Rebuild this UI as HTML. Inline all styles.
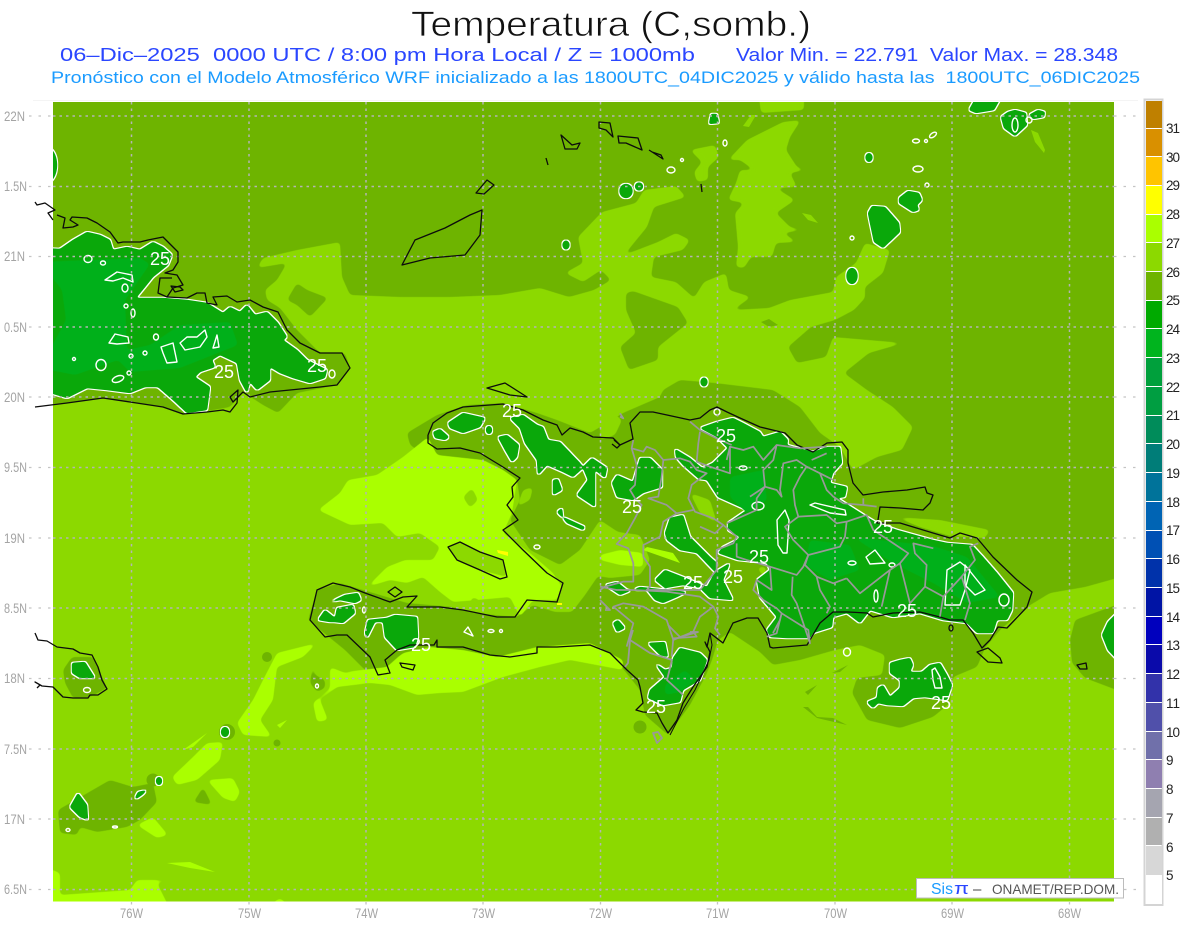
<!DOCTYPE html>
<html lang="es">
<head>
<meta charset="utf-8">
<title>Temperatura (C,somb.)</title>
<style>
html,body{margin:0;padding:0;background:#fff;width:1200px;height:927px;overflow:hidden}
svg{display:block}
text{font-family:"Liberation Sans",sans-serif}
.d{fill:#6eb400}
.l{fill:#8cd900}
.b{fill:#aaff00}
.g{fill:#0aa80a}
.g2{fill:#00b01a}
.w{fill:none;stroke:#fff;stroke-width:1.4;stroke-linejoin:round}
.c{fill:none;stroke:#0c0c0c;stroke-width:1.3;stroke-linejoin:round}
.p{fill:none;stroke:#999;stroke-width:1.8;stroke-linejoin:round}
.n{fill:#fff;font-size:18px}
.a{fill:#a4a4a4;font-size:13.5px}
.k{fill:#222;font-size:13.5px}
</style>
</head>
<body>
<svg width="1200" height="927" viewBox="0 0 1200 927" xmlns="http://www.w3.org/2000/svg">
<defs>
<clipPath id="m"><rect x="53" y="102" width="1061" height="799.5"/></clipPath>
<filter id="s" filterUnits="userSpaceOnUse" x="0" y="0" width="1200" height="927" color-interpolation-filters="sRGB">
<feGaussianBlur stdDeviation="2"/>
<feComponentTransfer><feFuncA type="linear" slope="6" intercept="-2.5"/></feComponentTransfer>
</filter>
<filter id="gf" filterUnits="userSpaceOnUse" x="0" y="0" width="1200" height="927" color-interpolation-filters="sRGB">
<feGaussianBlur in="SourceAlpha" stdDeviation="1.1" result="b"/>
<feComponentTransfer in="b" result="t"><feFuncA type="linear" slope="6" intercept="-2"/></feComponentTransfer>
<feMorphology in="t" operator="dilate" radius="1.2" result="o"/>
<feFlood flood-color="#ffffff"/>
<feComposite in2="o" operator="in" result="wh"/>
<feFlood flood-color="#0aa80a"/>
<feComposite in2="t" operator="in" result="gr"/>
<feMerge><feMergeNode in="wh"/><feMergeNode in="gr"/></feMerge>
</filter>
</defs>
<rect width="1200" height="927" fill="#fff"/>

<text x="411" y="36" font-size="35.5" fill="#111" stroke="#fff" stroke-width=".7" paint-order="normal" textLength="400" lengthAdjust="spacingAndGlyphs">Temperatura (C,somb.)</text>
<text x="60" y="61" font-size="18" fill="#2a46ff" textLength="635" lengthAdjust="spacingAndGlyphs" xml:space="preserve">06–Dic–2025  0000 UTC / 8:00 pm Hora Local / Z = 1000mb</text>
<text x="736" y="61" font-size="18" fill="#2a46ff" textLength="382" lengthAdjust="spacingAndGlyphs" xml:space="preserve">Valor Min. = 22.791  Valor Max. = 28.348</text>
<text x="51" y="83" font-size="17" fill="#1a9bff" textLength="1089" lengthAdjust="spacingAndGlyphs" xml:space="preserve">Pronóstico con el Modelo Atmosférico WRF inicializado a las 1800UTC_04DIC2025 y válido hasta las  1800UTC_06DIC2025</text>

<g clip-path="url(#m)">
<rect x="53" y="102" width="1061" height="800" fill="#8cd900"/>
<g filter="url(#s)">
<polygon class="d" points="35,85 1135,85 1135,573 1085,587 1050,593 1027,607 1000,630 985,648 977,667 953,677 950,703 933,717 900,728 867,720 852,693 857,678 882,675 885,655 860,645 835,650 800,660 773,665 760,652 745,642 730,632 718,640 712,660 706,675 690,705 668,735 645,715 640,690 612,655 590,645 560,650 500,658 430,648 400,655 378,675 365,670 345,650 308,620 317,590 340,583 363,590 407,603 453,607 473,613 517,617 533,605 555,612 572,612 585,595 598,576 610,578 640,575 650,560 640,535 618,532 600,520 580,550 560,565 530,550 510,520 520,500 517,480 503,470 483,460 437,463 410,445 407,433 437,415 467,405 503,403 537,413 557,420 590,433 607,423 623,413 660,397 663,390 680,380 715,383 773,390 800,407 820,433 840,447 853,470 877,457 902,450 913,427 893,407 867,390 844,373 869,353 904,343 833,337 826,357 797,363 788,347 811,327 835,320 854,310 865,298 865,287 883,273 890,250 865,243 856,263 836,277 833,292 790,300 769,308 733,310 751,297 729,290 726,273 704,282 694,298 676,282 651,277 654,257 683,250 690,240 676,233 658,242 624,255 647,227 654,207 686,197 676,186 644,190 636,203 602,212 578,237 583,263 565,273 583,282 601,270 611,280 594,290 569,297 540,288 500,295 450,297 400,297 350,295 342,277 340,242 297,250 263,258 257,268 287,263 277,280 265,290 267,300 280,308 297,330 320,353 345,353 350,368 337,385 297,393 278,413 263,405 243,392 230,407 213,410 183,414 163,407 103,398 67,403 35,405"/>
</g>
<g filter="url(#s)">
<polygon class="l" points="783,122 801,120 790,137 786,150 797,167 806,170 790,173 797,187 776,188 795,200 776,213 790,227 804,230 783,233 797,242 776,243 772,257 751,257 744,268 736,267 738,247 735,213 744,203 728,200 736,183 740,170 754,170 740,160 728,160 747,140 761,133"/>
<polygon class="l" points="758,90 804,90 804,110 761,113"/>
<polygon class="l" points="690,150 715,145 719,157 708,167 708,180 697,182 694,172 702,162"/>
<polygon class="l" points="600,423 612,412 622,420 615,435 600,440"/>
<polygon class="l" points="523,490 533,487 530,500 517,507"/>
<polygon class="l" points="690,493 710,500 717,523 700,513"/>
<polygon class="l" points="757,567 767,567 763,577"/>
<polygon class="l" points="895,517 940,520 990,530 985,538 950,536 920,527"/>
</g>
<polygon class="l" points="751,115 756,115 749,127 743,126"/>
<polygon class="l" points="1031,130 1038,133 1045,150 1044,153 1035,142"/>
<polygon class="l" points="802,213 811,215 818,223 808,220"/>
<g filter="url(#s)">
<polygon class="d" points="626,293 633,291 678,307 688,323 658,347 658,360 629,370 620,347 636,333 626,310"/>
<polygon class="d" points="287,300 297,283 307,290 328,298 310,317 297,305"/>
<polygon class="d" points="63,670 72,657 93,657 107,688 90,697 73,698 65,683"/>
<polygon class="d" points="58,810 110,780 133,787 153,783 157,802 140,820 127,827 97,832 80,827 77,835 60,833"/>
<polygon class="d" points="197,797 203,787 212,805 193,802"/>
<polygon class="d" points="313,663 315,675 325,680 325,688 317,692 310,683"/>
<polygon class="d" points="1130,600 1075,620 1070,640 1072,663 1085,678 1130,695"/>
</g>
<polygon class="d" points="761,322 769,319 778,325 769,327"/>
<polygon class="d" points="803,707 817,718 847,725 833,718 817,717 808,707"/>
<polygon class="d" points="805,692 817,685 808,695"/>
<polygon class="d" points="832,673 848,665 840,672"/>
<circle class="d" cx="267" cy="657" r="5"/><circle class="d" cx="277" cy="743" r="3.5"/>
<circle class="d" cx="153" cy="780" r="6.5"/><circle class="d" cx="227" cy="732" r="8"/>
<circle class="d" cx="640" cy="727" r="6.5"/>
<g filter="url(#s)">
<polygon class="b" points="318,510 340,493 348,480 377,475 403,457 428,437 437,455 483,460 503,470 517,480 512,513 503,533 530,553 553,573 562,587 557,600 533,600 520,617 510,597 477,600 453,602 440,592 423,577 407,583 390,580 367,587 387,567 405,560 433,560 440,547 420,533 397,537 383,523 350,525"/>
<polygon class="b" points="600,555 620,550 643,553 643,567 620,565 600,560"/>
<polygon class="b" points="387,667 403,653 430,647 463,650 497,657 537,647 590,643 623,660 623,670 570,660 540,667 503,677 463,692 440,693 417,695 390,685 370,683 345,672"/>
<polygon class="b" points="330,667 370,683 337,687 320,700 328,720 317,722 313,703 330,688"/>
<polygon class="b" points="263,680 277,653 317,643 303,657 277,667 273,700 260,720 272,737 243,735 237,723 253,700"/>
<polygon class="b" points="172,777 193,757 207,743 223,742 220,760 197,780 177,785"/>
<polygon class="b" points="207,780 233,778 240,792 235,802 223,798"/>
<polygon class="b" points="137,825 153,817 168,835 157,838"/>
<polygon class="b" points="40,865 60,873 60,895 130,890 137,880 182,880 157,883 173,915 40,915"/>
<polygon class="b" points="255,915 280,898 300,915"/>
</g>
<polygon class="b" points="643,550 680,563 673,553 647,547"/>
<polygon class="b" points="183,750 207,733 193,747"/>
<polygon class="b" points="277,725 287,720 280,728"/>
<polygon class="b" points="167,863 190,862 215,872 190,868"/>
<g filter="url(#s)">
<polygon class="l" points="463,497 472,488 478,500 470,508"/>
<polygon class="l" points="448,547 460,542 480,552 503,560 507,577 480,570 457,560"/>
<polygon class="l" points="472,597 480,600 478,610 468,610"/>
</g>
<polygon fill="#ffff00" points="497,550 508,552 508,556 498,553"/>
<rect x="557" y="603" width="5" height="2" fill="#ffff00"/>

<!-- green areas -->
<g filter="url(#gf)">
<polygon class="g" points="40,248 60,249 73,240 87,232 100,235 110,240 113,250 127,247 140,250 153,242 163,247 172,255 168,265 153,277 145,287 136,298 163,298 187,300 207,303 223,313 230,307 240,312 247,305 255,315 267,312 278,323 287,337 283,340 297,350 307,360 327,370 325,378 310,383 293,378 280,373 270,367 270,380 257,390 250,382 247,393 240,380 237,363 220,355 212,360 215,367 200,372 195,377 210,387 207,410 187,413 173,400 158,387 145,387 130,393 107,390 87,388 67,398 40,390"/>
<polygon class="g" points="700,428 717,422 733,418 743,423 760,432 763,437 780,432 788,440 787,445 813,452 827,447 840,447 842,463 833,473 830,483 847,487 845,497 837,498 867,517 877,523 897,530 933,540 947,543 972,545 983,557 997,573 1013,593 1012,610 1007,620 997,620 993,633 977,633 967,623 943,620 920,613 893,617 870,610 860,623 847,613 833,617 832,627 813,633 810,638 787,638 770,637 767,630 777,617 760,597 757,580 770,570 767,563 738,560 718,553 723,547 737,540 740,537 728,530 728,523 747,510 718,497 707,480 699,479 683,465 676,457 675,449 690,458 702,468 713,463 728,448 717,437 700,428"/>
<polygon class="g" points="612,483 617,475 633,482 640,458 650,458 662,470 662,487 643,493 633,500 617,497"/>
<polygon class="g" points="665,533 670,518 683,515 690,537 710,557 717,563 715,572 697,553 680,550 667,540"/>
<polygon class="g" points="655,580 665,570 683,577 707,587 715,572 730,563 723,580 733,600 710,598 700,588 683,585 665,588"/>
<polygon class="g" points="605,585 617,582 627,590 647,590 655,600 663,603 677,597 687,592 640,587 620,595"/>
<polygon class="g" points="613,623 618,620 625,628 617,632"/>
<polygon class="g" points="648,643 665,642 668,657 660,655"/>
<polygon class="g" points="680,648 700,653 707,660 700,680 683,690 680,702 663,705 648,698 650,690 665,677 655,663 665,670 672,668 673,658"/>
<polygon class="g" points="448,423 463,413 485,418 480,427 463,433 450,428"/>
<polygon class="g" points="433,432 440,429 449,437 445,440 435,438"/>
<ellipse class="g" cx="489" cy="430" rx="3" ry="4"/>
<polygon class="g" points="498,437 507,435 519,445 517,457 512,462 505,450"/>
<polygon class="g" points="510,418 523,415 537,425 543,427 548,440 560,442 580,463 583,467 592,458 607,468 605,478 595,470 595,507 577,495 588,480 583,468 573,477 563,472 547,465 538,475 537,460 525,443 520,428"/>
<polygon class="g" points="553,480 558,479 562,490 553,495"/>
<polygon class="g" points="557,512 562,508 563,517 585,527 583,530 567,523 563,518"/>
<polygon class="g" points="328,603 345,595 358,593 361,600 355,603 340,600"/>
<polygon class="g" points="318,620 325,610 335,618 337,608 353,605 355,613 343,623 335,622 330,622"/>
<polygon class="g" points="365,633 368,620 387,618 395,615 417,617 418,637 415,647 397,650 385,637 383,622 375,622 367,638"/>
<polygon class="g" points="867,702 877,698 878,688 883,685 890,697 900,688 900,680 890,673 890,663 900,660 910,658 913,665 910,672 922,672 930,665 940,663 947,675 952,685 947,700 925,697 913,698 903,706 887,705 878,703 873,708"/>
<polygon class="g" points="72,663 85,662 95,678 80,678 72,673"/>
<polygon class="g" points="70,807 78,793 87,805 88,820 80,817"/>
<polygon class="g" points="135,798 138,792 147,790 142,795 136,799"/>
<ellipse class="g" cx="159" cy="781" rx="3" ry="4"/>
<ellipse class="g" cx="225" cy="732" rx="4" ry="5"/>
<ellipse class="g" cx="46" cy="165" rx="11" ry="18"/>
<ellipse class="g" cx="626" cy="191" rx="6.5" ry="7"/><ellipse class="g" cx="639" cy="186.5" rx="4" ry="4"/>
<polygon class="g" points="711,114 717,114 719,123 709,124"/>
<ellipse class="g" cx="566" cy="245" rx="3.5" ry="4.5"/>
<ellipse class="g" cx="869" cy="157.5" rx="3.5" ry="4.5"/>
<polygon class="g" points="872,206 885,207 899,223 900,232 883,248 874,242 870,223 868,213"/>
<polygon class="g" points="908,191 919,193 922,200 917,205 919,210 913,212 899,203 899,198"/>
<ellipse class="g" cx="852" cy="276" rx="5.5" ry="8"/>
<ellipse class="g" cx="704" cy="382" rx="3.5" ry="4.5"/>
<polygon class="g" points="969,110 979,92 1004,92 994,110 976,113"/>
<polygon class="g" points="1015,110 1026,113 1027,125 1015,136 1004,128 1001,117 1008,112"/>
<polygon class="g" points="1029,115 1038,110 1045,112 1044,117 1033,119"/>
<polygon class="g" points="1125,605 1108,622 1102,635 1108,650 1125,668"/>
</g>
<g filter="url(#s)">
<polygon class="g2" points="40,262 140,258 150,264 125,300 127,350 150,345 180,325 230,322 238,345 180,368 130,372 118,360 75,375 40,368 66,320 62,290"/>
<polygon class="g2" points="730,477 763,470 767,500 747,513 730,497"/>
<polygon class="g2" points="853,537 933,546 967,557 1000,597 967,603 933,583 893,563"/>
<polygon class="g2" points="810,540 850,545 860,570 830,580 805,565"/>
<polygon class="g2" points="665,685 685,670 695,680 680,692 665,695"/>
</g>
<!-- thin contour loops -->
<g class="w">
<ellipse cx="364" cy="610" rx="1.5" ry="3"/>
<ellipse cx="537" cy="547" rx="3" ry="2"/>
<polygon points="468,627 473,636 464,632"/>
<ellipse cx="491" cy="631" rx="3" ry="1.5"/><circle cx="501" cy="631" r="1.5"/>
<ellipse cx="317" cy="686" rx="1.5" ry="2"/>
<polygon points="932,670 935,668 940,677 942,688 935,688 933,680"/>
<ellipse cx="847" cy="652" rx="3.5" ry="4"/>
<ellipse cx="87" cy="690" rx="3.5" ry="2.5"/>
<ellipse cx="68" cy="830" rx="2" ry="1.5"/><ellipse cx="115" cy="827" rx="2.5" ry="1"/>
<ellipse cx="671" cy="170" rx="4" ry="3"/><circle cx="682" cy="160" r="1.5"/>
<ellipse cx="725" cy="143" rx="2" ry="3"/>
<ellipse cx="916" cy="141" rx="3.5" ry="2"/><circle cx="926" cy="141" r="1.5"/>
<ellipse cx="933" cy="135" rx="4" ry="2" transform="rotate(-35 933 135)"/>
<ellipse cx="918" cy="169" rx="5" ry="3"/><circle cx="927" cy="185" r="2"/><circle cx="852" cy="238" r="2"/>
<ellipse cx="1015" cy="125" rx="3" ry="7"/>
<circle cx="1029" cy="120" r="3"/>
<ellipse cx="88" cy="259" rx="4" ry="3.5"/><ellipse cx="103" cy="263" rx="2.5" ry="2"/>
<polygon points="105,280 117,272 132,275 133,282 123,278 113,281"/>
<ellipse cx="125" cy="288" rx="3" ry="4"/><circle cx="126" cy="306" r="2"/><ellipse cx="133" cy="313" rx="2" ry="4"/>
<polygon points="109,343 115,334 128,337 129,343 117,344"/>
<ellipse cx="156" cy="337" rx="2.5" ry="3"/>
<polygon points="161,347 173,343 177,362 167,363 163,353"/>
<polygon points="180,343 187,337 197,337 205,330 207,337 200,347 185,350"/>
<polygon points="213,348 217,335 219,347"/>
<ellipse cx="101" cy="365" rx="5" ry="5.5"/><circle cx="74" cy="359" r="1.5"/><circle cx="131" cy="356" r="2"/><circle cx="145" cy="353" r="2"/>
<ellipse cx="118" cy="379" rx="6" ry="3" transform="rotate(-20 118 379)"/><circle cx="129" cy="373" r="2"/>
<ellipse cx="332" cy="374" rx="3" ry="4"/>
<ellipse cx="717" cy="412" rx="3" ry="3"/>
<ellipse cx="743" cy="468" rx="4" ry="2"/>
<ellipse cx="758" cy="506" rx="6" ry="4"/>
<polygon points="777,520 785,510 789,520 787,553 783,553 778,545"/>
<polygon points="810,505 815,503 845,510 846,515 830,513"/>
<polygon points="866,557 875,550 885,563 870,564"/>
<ellipse cx="852" cy="563" rx="4" ry="2"/>
<ellipse cx="892" cy="565" rx="3" ry="2"/>
<polygon points="965,565 985,590 975,595 965,585"/>
<ellipse cx="1004" cy="600" rx="5" ry="6"/>
<polygon points="947,570 960,562 970,570 965,590 960,605 945,605"/>
<ellipse cx="876" cy="596" rx="2" ry="6"/>
</g>
<!-- inner grid -->
<g stroke="#b4b4b4" stroke-width="1.5" stroke-dasharray="2.5 4" fill="none">
<path d="M53 116H1114M53 186.5H1114M53 256.5H1114M53 327H1114M53 397H1114M53 467.5H1114M53 538H1114M53 608H1114M53 678.5H1114M53 749H1114M53 819H1114M53 889.5H1114"/>
<path d="M131.5 102V902M249 102V902M366 102V902M483 102V902M600.5 102V902M717.5 102V902M835 102V902M952 102V902M1069.5 102V902"/>
</g>
</g>

<!-- outer grid ticks -->
<g stroke="#c4c4c4" stroke-width="1.3" stroke-dasharray="2.5 7" fill="none">
<path d="M29 116H53M29 186.5H53M29 256.5H53M29 327H53M29 397H53M29 467.5H53M29 538H53M29 608H53M29 678.5H53M29 749H53M29 819H53M29 889.5H53"/>
<path d="M1114 116H1136M1114 186.5H1136M1114 256.5H1136M1114 327H1136M1114 397H1136M1114 467.5H1136M1114 538H1136M1114 608H1136M1114 678.5H1136M1114 749H1136M1114 819H1136M1124 889.5H1136"/>
<path d="M131.5 902V906M249 902V906M366 902V906M483 902V906M600.5 902V906M717.5 902V906M835 902V906M952 902V906M1069.5 902V906"/>
</g>
<rect x="33" y="100" width="1105" height="1" fill="#f4f4f4"/>

<!-- coast -->
<g class="c">
<polyline points="35,202 37,205 45,203 55,210 48,213 53,220"/>
<polyline points="57,215 65,218 63,228 73,227 78,225 70,220 72,217 87,218 97,223 110,232 118,243 123,242 140,242 148,240 163,237 173,247 178,252 178,262 173,270 165,273 177,275 183,285 173,288 167,297 158,293 160,278 172,278"/>
<polygon points="171,286 180,287 183,290 175,292"/>
<polyline points="167,297 187,298 197,293 205,293 207,303 217,305 213,297 227,296 237,302 250,300 263,307 278,312 287,330 300,343 320,353 342,353 350,368 337,385 320,387 290,390 270,392 250,397 243,392 233,402 230,397 238,390 237,403 230,412 223,410 207,412 183,414 163,407 130,402 103,398 67,403 35,407"/>
<polyline points="35,633 38,640 47,641 57,647 73,649 80,653 92,655 98,667 102,680 107,689 98,695 90,695 88,698 73,698 63,697 53,687 42,686 35,682 40,685 37,688"/>
<polyline points="428,435 433,423 447,413 463,407 503,404 523,410 543,420 557,425 562,435 570,428 583,432 593,437 613,438 620,445 633,439 630,423 640,412 653,412 667,415 690,420 700,418 710,410 717,407 727,412 740,418 760,427 785,433 797,445 813,452 827,443 842,442 848,450 848,463 853,483 863,495 883,492 907,490 925,487 927,493 933,495 930,503 923,510 900,508 880,507 878,520 877,523 900,523 933,533 950,538 960,533 977,538 993,557 1017,580 1032,592 1027,607 1007,628 998,627 990,640 982,648 973,633 963,620 950,620 940,617 920,612 893,613 873,617 867,613 848,612 833,612 820,623 807,645 773,648 770,647 767,633 758,618 747,618 733,623 723,643 710,633 707,647 705,642 710,652 707,667 693,687 683,703 677,720 668,733 662,723 657,713 643,712 636,710 643,703 640,687 638,680 627,670 620,663 610,653 590,645 557,647 537,647 537,653 510,657 490,655 463,647 437,647 437,640 434,645 410,645 397,650 385,660 390,673 378,675 370,657 347,635 337,635 325,637 310,620 317,590 333,583 350,587 365,593 390,602 403,597 417,596 407,607 440,607 463,610 497,617 515,617 527,600 557,602 563,583 547,573 523,550 503,530 518,520 507,505 513,497 512,487 520,478 503,467 480,453 460,448 437,449 428,443 428,435"/>
<polyline points="710,633 712,645 709,660 695,690 684,708 670,735" stroke-width="1"/>
<polygon points="448,547 460,542 480,552 503,560 507,577 500,579 480,570 457,560"/>
<polygon points="487,388 505,383 527,397 510,395"/>
<polygon points="388,592 395,587 402,592 395,597"/>
<polygon points="400,663 415,665 413,670 402,667"/>
<polygon points="402,265 415,240 445,228 470,215 482,210 480,235 465,255 430,258"/>
<polygon points="476,193 487,180 494,185 484,194"/>
<polygon points="977,652 988,648 1000,658 1002,663 988,662"/>
<polygon points="1077,665 1086,663 1087,669 1080,669"/>
<polygon points="599,122 610,123 613,137 606,130 599,128"/>
<polygon points="618,136 638,138 642,150 626,143 619,143"/>
<polygon points="561,135 572,145 580,143 577,149 565,149"/>
<polyline points="546,158 548,165"/>
<polyline points="649,150 663,159 661,155 652,152"/>
<polyline points="701,184 702,192"/>
<polyline points="614,440 620,445 617,448 612,444"/>
<ellipse cx="951" cy="628" rx="2" ry="3"/>
</g>

<!-- provinces -->
<g class="p" transform="translate(600 390) scale(.3333)" style="stroke-width:5.2">
<polyline points="100,150 95,175 110,225 105,285 90,300 105,325 125,345 105,385 80,430 50,462 85,475 100,520 100,575 70,575 15,590 0,600"/>
<polyline points="95,175 130,185 140,170 165,180 190,210 240,205 270,215 290,240 320,250 275,285 265,325 285,365 340,385 370,405"/>
<polyline points="190,210 185,260 175,320 145,325 200,345 230,370 280,360"/>
<polyline points="230,370 190,395 180,440 130,465 130,500 150,530 150,590 140,600 200,600 300,600 350,540 350,480 400,460 410,440 370,405 345,430 300,410"/>
<polyline points="300,125 295,160 290,215 330,230 390,250 390,170 430,180 460,170 490,210 530,165 600,175 680,170"/>
<polyline points="390,170 380,210"/>
<polyline points="270,95 300,120 350,145 395,165"/>
<polyline points="530,165 520,210 490,240 495,290 530,300 545,320 540,300 550,220 590,210 620,230 600,260 580,300 585,345 595,380 555,410 580,450 625,495"/>
<polyline points="620,230 660,250 680,300 700,320 730,340 790,345 830,350"/>
<polyline points="635,210 680,190"/>
<polyline points="660,250 700,270"/>
<polyline points="790,325 790,345"/>
<polyline points="450,320 495,290 470,325 470,360 380,400"/>
<polyline points="595,380 680,375 710,400 740,395 800,375 820,420 925,490 900,520 870,540 845,650"/>
<polyline points="740,395 735,440 720,470 625,495 610,530 590,555 510,530 440,510 410,500 410,460"/>
<polyline points="625,495 615,525 650,560 660,600 690,650 680,670"/>
<polyline points="740,565 700,580 650,560"/>
<polyline points="740,565 780,610 870,540"/>
<polyline points="900,520 930,640 975,590 980,525 945,490 940,460 1000,475"/>
<polyline points="975,590 1030,620 1020,680"/>
<polyline points="1030,620 1085,560 1110,640 1095,690"/>
<polyline points="1085,560 1125,510 1110,470 1135,460"/>
<polyline points="578,560 575,615 590,640 610,700 630,760 625,720 545,670"/>
<polyline points="510,530 515,600 470,570 460,600 490,630 530,655 545,670 530,730 500,740"/>
<polyline points="0,590 50,600 100,600 200,605 300,620 340,650 355,680 345,715 360,735"/>
<polyline points="340,650 300,680 280,725 220,750 200,690 130,650 70,640 40,650 100,700 80,770"/>
<polyline points="280,725 290,740 220,745 215,800"/>
<polyline points="0,630 30,660 15,660"/>
<polyline points="60,70 70,85 60,80"/>
</g>
<g class="p">
<polyline points="633,630 630,640 628,663 625,667"/>
<polyline points="630,640 650,653 672,660 667,680 680,692 683,695"/>
<polyline points="690,632 698,632 680,637 668,625"/>
<polyline points="773,633 780,620"/>
<polygon points="653,733 658,732 662,738 657,743"/>
</g>

<!-- contour labels -->
<text class="n" x="150" y="265">25</text>
<text class="n" x="214" y="378">25</text>
<text class="n" x="307" y="372">25</text>
<text class="n" x="502" y="417">25</text>
<text class="n" x="716" y="442">25</text>
<text class="n" x="622" y="513">25</text>
<text class="n" x="873" y="533">25</text>
<text class="n" x="749" y="563">25</text>
<text class="n" x="723" y="583">25</text>
<text class="n" x="683" y="589">25</text>
<text class="n" x="897" y="617">25</text>
<text class="n" x="646" y="713">25</text>
<text class="n" x="931" y="709">25</text>
<text class="n" x="411" y="651">25</text>

<!-- axis labels -->
<g class="a">
<text x="4" y="121" textLength="21" lengthAdjust="spacingAndGlyphs">22N</text>
<text x="4" y="191" textLength="23" lengthAdjust="spacingAndGlyphs">1.5N</text>
<text x="4" y="261" textLength="21" lengthAdjust="spacingAndGlyphs">21N</text>
<text x="4" y="332" textLength="23" lengthAdjust="spacingAndGlyphs">0.5N</text>
<text x="4" y="402" textLength="21" lengthAdjust="spacingAndGlyphs">20N</text>
<text x="4" y="472" textLength="23" lengthAdjust="spacingAndGlyphs">9.5N</text>
<text x="4" y="543" textLength="21" lengthAdjust="spacingAndGlyphs">19N</text>
<text x="4" y="613" textLength="23" lengthAdjust="spacingAndGlyphs">8.5N</text>
<text x="4" y="683" textLength="21" lengthAdjust="spacingAndGlyphs">18N</text>
<text x="4" y="754" textLength="23" lengthAdjust="spacingAndGlyphs">7.5N</text>
<text x="4" y="824" textLength="21" lengthAdjust="spacingAndGlyphs">17N</text>
<text x="4" y="894" textLength="23" lengthAdjust="spacingAndGlyphs">6.5N</text>
<text x="120" y="918" textLength="23" lengthAdjust="spacingAndGlyphs">76W</text>
<text x="238" y="918" textLength="23" lengthAdjust="spacingAndGlyphs">75W</text>
<text x="355" y="918" textLength="23" lengthAdjust="spacingAndGlyphs">74W</text>
<text x="472" y="918" textLength="23" lengthAdjust="spacingAndGlyphs">73W</text>
<text x="589" y="918" textLength="23" lengthAdjust="spacingAndGlyphs">72W</text>
<text x="706" y="918" textLength="23" lengthAdjust="spacingAndGlyphs">71W</text>
<text x="824" y="918" textLength="23" lengthAdjust="spacingAndGlyphs">70W</text>
<text x="941" y="918" textLength="23" lengthAdjust="spacingAndGlyphs">69W</text>
<text x="1058" y="918" textLength="23" lengthAdjust="spacingAndGlyphs">68W</text>
</g>

<!-- credit box -->
<rect x="916.5" y="878.5" width="207" height="19.5" fill="#fff" stroke="#bcbcbc"/>
<text x="931" y="894" font-size="15.5" fill="#1a9bff" textLength="22" lengthAdjust="spacingAndGlyphs">Sis</text>
<text x="954" y="894" font-size="17" fill="#2a46ff" textLength="15" lengthAdjust="spacingAndGlyphs">π</text>
<text x="973" y="894" font-size="15" fill="#444">–</text>
<text x="992" y="894" font-size="14" fill="#555" textLength="127" lengthAdjust="spacingAndGlyphs">ONAMET/REP.DOM.</text>

<!-- colour bar -->
<rect x="1144.5" y="99.5" width="18" height="805.5" fill="#fff" stroke="#d4d4d4" stroke-width="2"/>
<g>
<rect x="1146" y="101" width="16" height="27" fill="#bf8000"/>
<rect x="1146" y="129" width="16" height="27" fill="#d99000"/>
<rect x="1146" y="157" width="16" height="28" fill="#ffc400"/>
<rect x="1146" y="186" width="16" height="28" fill="#ffff00"/>
<rect x="1146" y="215" width="16" height="27" fill="#aaff00"/>
<rect x="1146" y="243" width="16" height="28" fill="#8cd900"/>
<rect x="1146" y="272" width="16" height="28" fill="#6eb400"/>
<rect x="1146" y="301" width="16" height="27" fill="#00aa00"/>
<rect x="1146" y="329" width="16" height="28" fill="#00b41e"/>
<rect x="1146" y="358" width="16" height="28" fill="#00a03c"/>
<rect x="1146" y="387" width="16" height="28" fill="#009e41"/>
<rect x="1146" y="416" width="16" height="27" fill="#008c5a"/>
<rect x="1146" y="444" width="16" height="28" fill="#007d78"/>
<rect x="1146" y="473" width="16" height="28" fill="#00739a"/>
<rect x="1146" y="502" width="16" height="28" fill="#0064b4"/>
<rect x="1146" y="531" width="16" height="27" fill="#0050b4"/>
<rect x="1146" y="559" width="16" height="28" fill="#0032aa"/>
<rect x="1146" y="588" width="16" height="28" fill="#0014a5"/>
<rect x="1146" y="617" width="16" height="27" fill="#0000be"/>
<rect x="1146" y="645" width="16" height="28" fill="#0a0aaa"/>
<rect x="1146" y="674" width="16" height="28" fill="#3232aa"/>
<rect x="1146" y="703" width="16" height="28" fill="#5050aa"/>
<rect x="1146" y="732" width="16" height="27" fill="#7070aa"/>
<rect x="1146" y="760" width="16" height="28" fill="#8f7fb0"/>
<rect x="1146" y="789" width="16" height="28" fill="#a5a5b0"/>
<rect x="1146" y="818" width="16" height="27" fill="#b0b0b0"/>
<rect x="1146" y="846" width="16" height="29" fill="#d7d7d7"/>
<rect x="1146" y="875" width="16" height="29" fill="#ffffff"/>
</g>
<g class="k">
<text x="1166" y="133" textLength="14">31</text>
<text x="1166" y="162" textLength="14">30</text>
<text x="1166" y="190" textLength="14">29</text>
<text x="1166" y="219" textLength="14">28</text>
<text x="1166" y="248" textLength="14">27</text>
<text x="1166" y="277" textLength="14">26</text>
<text x="1166" y="305" textLength="14">25</text>
<text x="1166" y="334" textLength="14">24</text>
<text x="1166" y="363" textLength="14">23</text>
<text x="1166" y="392" textLength="14">22</text>
<text x="1166" y="420" textLength="14">21</text>
<text x="1166" y="449" textLength="14">20</text>
<text x="1166" y="478" textLength="14">19</text>
<text x="1166" y="507" textLength="14">18</text>
<text x="1166" y="535" textLength="14">17</text>
<text x="1166" y="564" textLength="14">16</text>
<text x="1166" y="593" textLength="14">15</text>
<text x="1166" y="622" textLength="14">14</text>
<text x="1166" y="650" textLength="14">13</text>
<text x="1166" y="679" textLength="14">12</text>
<text x="1166" y="708" textLength="14">11</text>
<text x="1166" y="737" textLength="14">10</text>
<text x="1166" y="765">9</text>
<text x="1166" y="794">8</text>
<text x="1166" y="823">7</text>
<text x="1166" y="852">6</text>
<text x="1166" y="880">5</text>
</g>
</svg>
</body>
</html>
